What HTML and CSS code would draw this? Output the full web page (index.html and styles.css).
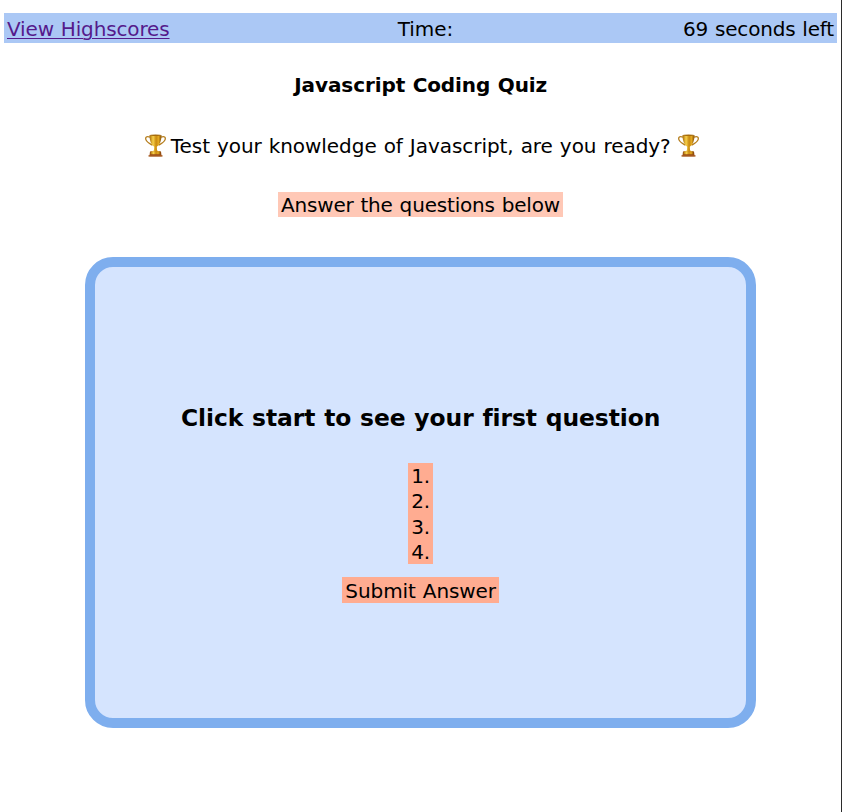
FILE: index.html
```
<!DOCTYPE html>
<html lang="en">
<head>
<meta charset="utf-8">
<title>Javascript Coding Quiz</title>
<link rel="stylesheet" href="styles.css">
</head>
<body>
<svg width="0" height="0" class="defs" aria-hidden="true">
  <defs>
    <linearGradient id="gold" x1="0" x2="1" y1="0" y2="0">
      <stop offset="0" stop-color="#a86a06"/><stop offset=".3" stop-color="#f7d04a"/>
      <stop offset=".55" stop-color="#c98a10"/><stop offset=".75" stop-color="#e3a820"/><stop offset="1" stop-color="#824b03"/>
    </linearGradient>
    <symbol id="trophy" viewBox="0 0 21 23">
      <path d="M5 3.200C1.500 1.800.2 3.400.9 5.600 1.700 8.200 4.500 9.500 7.400 11.200M16 3.200c3.500-1.400 4.800.2 4.100 2.400-.8 2.600-3.600 3.900-6.500 5.600" fill="none" stroke="#b57d1c" stroke-width="1.300"/>
      <path d="M4.500 1.200h12c0 5.500-1.500 9.500-4.700 11.500l.2 3.300 1.500 2h-6l1.500-2 .2-3.300C6 10.700 4.500 6.700 4.500 1.200z" fill="url(#gold)"/>
      <ellipse cx="10.500" cy="1.300" rx="6" ry=".8" fill="#a66c0b"/>
      <path d="M5 17.500h11l.6 4.800H4.400z" fill="#9a4b16"/>
      <path d="M5.700 17.300h9.600l.4 3H5.300z" fill="url(#gold)"/>
      <path d="M3.500 21.200h14v1.400h-14z" fill="#a75b20"/>
    </symbol>
  </defs>
</svg>
<header class="topbar">
  <a class="scores" href="#">View Highscores</a>
  <span class="time">Time:</span>
  <span class="left">69 seconds left</span>
</header>
<main class="page">
  <h1 class="title">Javascript Coding Quiz</h1>
  <p class="intro"><svg class="trophy"><use href="#trophy"/></svg><span class="intro-text">Test your knowledge of Javascript, are you ready?</span><svg class="trophy"><use href="#trophy"/></svg></p>
  <p class="hint">Answer the questions below</p>
  <section class="card">
    <h2 class="question">Click start to see your first question</h2>
    <div class="answers">
      <div class="answer">1.</div>
      <div class="answer">2.</div>
      <div class="answer">3.</div>
      <div class="answer">4.</div>
    </div>
    <div class="submit">Submit Answer</div>
  </section>
</main>
</body>
</html>
```
FILE: styles.css
```
* { box-sizing: border-box; }
body {
  margin: 0;
  height: 812px;
  padding: 13px 4px 0 4.400px;
  border-right: 1px solid #2b2b2b;
  background: #fff;
  color: #000;
  font: 20px/27px Verdana, "DejaVu Sans", sans-serif;
  word-spacing: .7px;
  font-variant-ligatures: none;
  overflow: hidden;
}
.defs { position: absolute; }
h1, h2, p { margin: 0; }
.topbar {
  display: grid;
  grid-template-columns: 1fr auto 1fr;
  height: 30px;
  padding: 3px 3px 0 2.600px;
  background: #abc8f5;
  white-space: nowrap;
}
.scores {
  justify-self: start;
  color: #551a8b;
  letter-spacing: -.14px;
  text-decoration-thickness: 1px;
  text-underline-offset: 2px;
}
.time { padding-left: 10px; }
.left { justify-self: end; letter-spacing: -.18px; }
.page { display: flex; flex-direction: column; align-items: center; white-space: nowrap; }
.title { margin-top: 29px; font-size: 20px; line-height: 27px; letter-spacing: -.1px; }
.intro { display: flex; margin: 34px 0 0 2px; height: 25px; }
.trophy { width: 21px; height: 23px; margin-top: 1px; }
.intro-text { margin: 0 7px 0 5px; letter-spacing: -.05px; }
.hint { height: 25px; margin-top: 34px; padding: 0 3px 0 2.600px; background: #ffc8b6; letter-spacing: -.18px; }
.card {
  display: flex;
  flex-direction: column;
  align-items: center;
  width: 671px;
  height: 471px;
  margin-top: 40px;
  padding-top: 137px;
  border: 10px solid #7eaeee;
  border-radius: 28px;
  background: #d5e4fe;
}
.question { font-size: 23.400px; line-height: 28px; letter-spacing: -.06px; }
.answers { margin-top: 31px; }
.answer { height: 25.300px; padding: 0 3px; background: #ffac91; }
.submit { height: 26px; margin-top: 13px; padding: 0 3px; background: #ffac91; line-height: 28px; letter-spacing: -.08px; }
```
